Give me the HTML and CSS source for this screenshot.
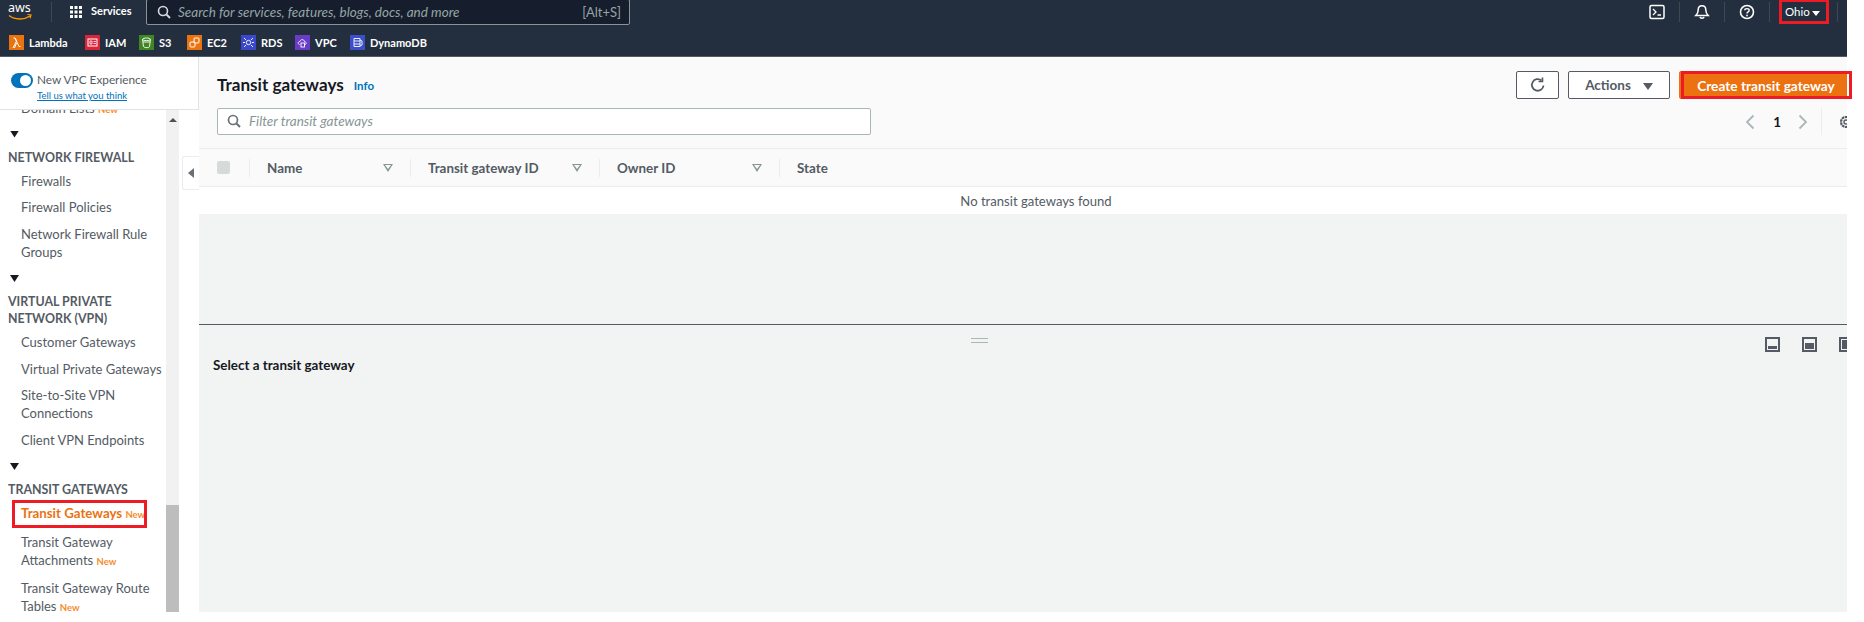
FILE: index.html
```html
<!DOCTYPE html>
<html lang="en">
<head>
<meta charset="utf-8">
<title>Transit gateways</title>
<link rel="stylesheet" href="styles.css">
</head>
<body>
<div class="page">
  <div class="app">
    <header class="nav">
      <div class="nav-top">
        <svg class="aws" viewBox="0 0 24 20" width="24" height="20"><text x="0" y="10" class="aws-text">aws</text><path d="M1 13.500c6 4.500 15 4.500 21 .5" fill="none" stroke="#f90" stroke-width="1.500"/><path d="M19.500 12.500l3.500.5-1 3.200" fill="none" stroke="#f90" stroke-width="1.200"/></svg>
        <span class="nav-sep sep-a"></span>
        <svg class="grid-icon" viewBox="0 0 14 14" width="14" height="14"><path fill="#fff" d="M1 1h3v3H1zM5.500 1h3v3h-3zM10 1h3v3h-3zM1 5.500h3v3H1zM5.500 5.500h3v3h-3zM10 5.500h3v3h-3zM1 10h3v3H1zM5.500 10h3v3h-3zM10 10h3v3h-3z"/></svg>
        <span class="services">Services</span>
        <div class="search">
          <svg viewBox="0 0 14 14" width="14" height="14"><circle cx="6" cy="6" r="4.500" fill="none" stroke="#d5dbdb" stroke-width="1.600"/><path d="M9.500 9.500L13 13" stroke="#d5dbdb" stroke-width="1.800"/></svg>
          <span class="search-text">Search for services, features, blogs, docs, and more</span>
          <span class="search-key">[Alt+S]</span>
        </div>
        <div class="nav-right">
          <svg viewBox="0 0 16 16" width="16" height="16"><rect x="1" y="1.500" width="14" height="13" rx="1.500" fill="none" stroke="#fff" stroke-width="1.500"/><path d="M4 5l3 3-3 3M8.500 11H12" fill="none" stroke="#fff" stroke-width="1.300"/></svg>
          <span class="nav-sep"></span>
          <svg viewBox="0 0 16 16" width="16" height="16"><path d="M8 1.800c-2.600 0-3.800 2-3.800 4.200 0 2.500-1 4-2.400 5.500h12.400C12.800 10 11.800 8.500 11.800 6c0-2.200-1.200-4.200-3.800-4.200zM6 13c.3 1.500 3.700 1.500 4 0" fill="none" stroke="#fff" stroke-width="1.500"/></svg>
          <span class="nav-sep"></span>
          <svg viewBox="0 0 16 16" width="16" height="16"><circle cx="8" cy="8" r="6.500" fill="none" stroke="#fff" stroke-width="1.600"/><path d="M5.800 6.300C5.800 4 10.200 4 10.200 6.300 10.200 8 8 7.800 8 9.500" fill="none" stroke="#fff" stroke-width="1.400"/><rect x="7.200" y="10.700" width="1.600" height="1.600" fill="#fff"/></svg>
          <span class="nav-sep"></span>
          <span class="region">Ohio</span><span class="caret-white"></span>
          <span class="nav-sep"></span>
        </div>
      </div>
      <div class="nav-fav">
        <span class="fav fav-lambda"><svg class="svc orange" viewBox="0 0 15 15"><path d="M4 13l3.500-7L6 3H4.500M6 3l4 8.500h1.500M7.500 8L5.500 13" fill="none" stroke="#fff" stroke-width="1"/></svg>Lambda</span>
        <span class="fav fav-iam"><svg class="svc red" viewBox="0 0 15 15"><rect x="3" y="4" width="9" height="7" fill="none" stroke="#fff"/><path d="M5 6h2v3H5zM8.500 6.500H11M8.500 8.500H11" fill="none" stroke="#fff" stroke-width=".8"/></svg>IAM</span>
        <span class="fav fav-s3"><svg class="svc green" viewBox="0 0 15 15"><path d="M3.500 4.500c0-2 8-2 8 0l-1 7c0 1.500-5 1.500-6 0zM3.500 4.500c1 1.500 7 1.500 8 0M4 7h7" fill="none" stroke="#fff" stroke-width=".9"/></svg>S3</span>
        <span class="fav fav-ec2"><svg class="svc orange" viewBox="0 0 15 15"><rect x="3" y="7" width="5" height="5" rx="1" fill="none" stroke="#fff"/><rect x="7" y="3" width="5" height="5" rx="1" fill="none" stroke="#fff"/></svg>EC2</span>
        <span class="fav fav-rds"><svg class="svc blue" viewBox="0 0 15 15"><circle cx="7.500" cy="7.500" r="2.200" fill="none" stroke="#fff" stroke-width=".9"/><path d="M3 3l2 2M12 3l-2 2M3 12l2-2M12 12l-2-2M2 7.500h2M11 7.500h2" stroke="#fff" stroke-width=".9"/></svg>RDS</span>
        <span class="fav fav-vpc"><svg class="svc purple" viewBox="0 0 15 15"><path d="M4.500 9.500c-2-.5-1.500-3 .5-3 .5-2.500 4-2.500 4.500 0 2 0 2 3 .5 3" fill="none" stroke="#fff" stroke-width=".9"/><rect x="6" y="8" width="3.500" height="4" fill="none" stroke="#fff" stroke-width=".9"/></svg>VPC</span>
        <span class="fav"><svg class="svc indigo" viewBox="0 0 15 15"><path d="M4 3.500h6v8H4zM4 6h6M4 9h6M10 5l2 1v4l-2 1" fill="none" stroke="#fff" stroke-width=".9"/></svg>DynamoDB</span>
      </div>
    </header>

    <div class="body">
      <aside class="sidebar">
        <div class="side-head">
          <div class="exp">
            <span class="toggle"></span>
            <div>
              <div class="exp-title">New VPC Experience</div>
              <a class="exp-link">Tell us what you think</a>
            </div>
          </div>
        </div>
        <div class="side-scroll">
          <div class="side-clip">
            <ul class="side-list">
              <li class="item item-first">Domain Lists <span class="new">New</span></li>
              <li class="tri"></li>
              <li class="heading">NETWORK FIREWALL</li>
              <li class="item">Firewalls</li>
              <li class="item">Firewall Policies</li>
              <li class="item">Network Firewall Rule Groups</li>
              <li class="tri"></li>
              <li class="heading">VIRTUAL PRIVATE NETWORK (VPN)</li>
              <li class="item">Customer Gateways</li>
              <li class="item">Virtual Private Gateways</li>
              <li class="item">Site-to-Site VPN Connections</li>
              <li class="item">Client VPN Endpoints</li>
              <li class="tri"></li>
              <li class="heading">TRANSIT GATEWAYS</li>
              <li class="item active">Transit Gateways <span class="new">New</span></li>
              <li class="item">Transit Gateway Attachments <span class="new">New</span></li>
              <li class="item">Transit Gateway Route Tables <span class="new">New</span></li>
            </ul>
          </div>
          <div class="scrollbar">
            <span class="arrow-up"></span>
            <span class="thumb"></span>
          </div>
        </div>
      </aside>

      <div class="rail"><span class="rail-tab"><span class="tri-left"></span></span></div>

      <main class="main">
        <section class="top-pane">
          <div class="toolbar">
            <div class="title-row">
              <h1>Transit gateways</h1>
              <span class="info">Info</span>
              <div class="actions">
                <button class="btn btn-icon"><svg viewBox="0 0 18 18" width="18" height="18"><path d="M14.500 9.500a5.800 5.800 0 1 1-2-5" fill="none" stroke="#545b64" stroke-width="1.800"/><path d="M13.500 1.500v4h-4" fill="none" stroke="#545b64" stroke-width="1.600"/></svg></button>
                <button class="btn btn-actions">Actions<span class="caret-dark"></span></button>
                <button class="btn btn-primary">Create transit gateway</button>
              </div>
            </div>
            <div class="filter-row">
              <div class="filter">
                <svg viewBox="0 0 14 14" width="14" height="14"><circle cx="6" cy="6" r="4.500" fill="none" stroke="#687078" stroke-width="1.700"/><path d="M9.500 9.500L13 13" stroke="#687078" stroke-width="2"/></svg>
                <span>Filter transit gateways</span>
              </div>
              <div class="pager">
                <svg viewBox="0 0 10 16" width="10" height="16"><path d="M8.500 1.500L2 8l6.500 6.500" fill="none" stroke="#aab7b8" stroke-width="1.800"/></svg>
                <b>1</b>
                <svg viewBox="0 0 10 16" width="10" height="16"><path d="M1.500 1.500L8 8l-6.500 6.500" fill="none" stroke="#aab7b8" stroke-width="1.800"/></svg>
                <span class="pager-sep"></span>
                <svg class="gear" viewBox="0 0 16 16" width="16" height="16"><circle cx="8" cy="8" r="5" fill="none" stroke="#545b64" stroke-width="2.200" stroke-dasharray="2.500 .6"/><circle cx="8" cy="8" r="2" fill="none" stroke="#545b64" stroke-width="1.400"/></svg>
              </div>
            </div>
          </div>
          <div class="thead">
            <span class="cell cell-check"><span class="check"></span></span>
            <span class="cell cell-name">Name<span class="sort"></span></span>
            <span class="cell cell-id">Transit gateway ID<span class="sort"></span></span>
            <span class="cell cell-owner">Owner ID<span class="sort"></span></span>
            <span class="cell cell-state">State</span>
          </div>
          <div class="empty-row">No transit gateways found</div>
        </section>

        <section class="bottom-pane">
          <span class="handle"></span>
          <div class="pane-head">
            <strong>Select a transit gateway</strong>
            <div class="pane-icons">
              <svg viewBox="0 0 15 15" width="15" height="15"><rect x="1" y="1" width="13" height="13" fill="none" stroke="#545b64" stroke-width="2"/><rect x="3" y="9" width="9" height="3" fill="#545b64"/></svg>
              <svg viewBox="0 0 15 15" width="15" height="15"><rect x="1" y="1" width="13" height="13" fill="none" stroke="#545b64" stroke-width="2"/><rect x="3" y="6" width="9" height="6" fill="#545b64"/></svg>
              <svg viewBox="0 0 15 15" width="15" height="15"><rect x="1" y="1" width="13" height="13" fill="none" stroke="#545b64" stroke-width="2"/><rect x="3" y="3" width="9" height="9" fill="#545b64"/></svg>
            </div>
          </div>
        </section>
      </main>
    </div>
  </div>
  <span class="mark mark-region"></span>
  <span class="mark mark-create"></span>
  <span class="mark mark-side"></span>
</div>
</body>
</html>
```
FILE: styles.css
```css
* { box-sizing: border-box; }
html, body { margin: 0; padding: 0; background: #fff; }
body { font-family: "Lato", "Open Sans", sans-serif; font-size: 13px; color: #16191f; }
.page { position: relative; width: 1864px; height: 622px; overflow: hidden; }
.app { width: 1847px; height: 612px; overflow: hidden; display: flex; flex-direction: column; }

.nav { height: 57px; background: #232f3e; color: #fff; flex: none; border-bottom: 1px solid #545b64; }
.nav-top { height: 31px; display: flex; align-items: flex-start; padding-left: 8px; }
.aws { margin-top: 2px; flex: none; }
.aws-text { font-family: "Noto Sans", sans-serif; font-size: 12.5px; fill: #fff; }
.nav-sep { width: 1px; height: 20px; background: #414750; flex: none; }
.sep-a { margin: 2px 0 0 19px; }
.grid-icon { margin: 5px 0 0 17px; flex: none; }
.services { margin: 2px 0 0 8px; font-size: 11px; font-weight: 700; line-height: 18px; width: 55px; flex: none; }
.search { width: 484px; height: 26px; margin-top: -1px; background: #161e2d; border: 1px solid #879596; border-radius: 2px; display: flex; align-items: center; padding: 0 8px 0 10px; flex: none; }
.search svg { flex: none; }
.search-text { margin-left: 7px; font-style: italic; color: #95a5a6; font-size: 13.5px; flex: 1; white-space: nowrap; }
.search-key { color: #95a5a6; font-size: 13px; }
.nav-right { margin-left: auto; display: flex; align-items: center; height: 24px; padding-right: 9px; }
.nav-right svg { flex: none; margin: 0 14px; }
.region { margin-left: 15px; width: 23px; font-size: 11.5px; line-height: 18px; }
.caret-white { margin: 2px 17px 0 4px; border: 4.5px solid transparent; border-top: 5px solid #fff; border-bottom: 0; }

.nav-fav { height: 23px; display: flex; align-items: center; font-size: 11px; font-weight: 700; padding-left: 9px; }
.fav { display: flex; align-items: center; gap: 5px; width: 76px; line-height: 16px; white-space: nowrap; }
.fav-iam { width: 54px; }
.fav-s3 { width: 48px; }
.fav-ec2 { width: 54px; }
.fav-rds { width: 54px; }
.fav-vpc { width: 55px; }
.svc { width: 15px; height: 15px; flex: none; }
.orange { background: #e8730f; }
.red { background: #d8253a; }
.green { background: #3f8624; }
.blue { background: #3b48cc; }
.purple { background: #693cc5; }
.indigo { background: #3b4fc9; }

.body { flex: 1; display: flex; min-height: 0; }
.sidebar { width: 179px; flex: none; display: flex; flex-direction: column; background: #fff; position: relative; }
.side-head { height: 53px; flex: none; width: 199px; background: #fff; border-bottom: 1px solid #e1e4e4; border-right: 1px solid #e1e4e4; padding: 15px 0 0 11px; position: relative; z-index: 2; }
.exp { display: flex; gap: 4px; }
.toggle { width: 22px; height: 15px; margin-top: 1px; border-radius: 8px; background: #0073bb; position: relative; flex: none; }
.toggle::after { content: ""; position: absolute; right: 2px; top: 2px; width: 11px; height: 11px; border-radius: 50%; background: #fff; }
.exp-title { font-size: 11.8px; line-height: 16px; color: #545b64; }
.exp-link { display: block; font-size: 9.5px; line-height: 14px; margin-top: 1px; color: #0073bb; text-decoration: underline; }
.side-scroll { flex: 1; display: flex; min-height: 0; }
.side-clip { width: 166px; overflow: hidden; }
.side-list { list-style: none; margin: -15px 0 0; padding: 0; width: 166px; }
.item { padding: 4px 0 4.5px 21px; line-height: 18px; color: #545b64; font-size: 13px; }
.item-first { padding-bottom: 1.5px; }
.tri { width: 9px; height: 7px; margin: 10px 0 11px 10px; background: #16191f; clip-path: polygon(0 0, 100% 0, 50% 100%); }
.heading { padding: 0 0 2px 8px; font-weight: 700; font-size: 12.4px; line-height: 17px; color: #545b64; width: 150px; }
.new { color: #f68d2e; font-size: 9.5px; font-weight: 700; }
.active { color: #ec7211; font-size: 13.3px; font-weight: 700; white-space: nowrap; }
.scrollbar { width: 13px; background: #f1f1f1; flex: none; display: flex; flex-direction: column; align-items: center; justify-content: space-between; padding-top: 8px; }
.arrow-up { border: 4px solid transparent; border-bottom: 4px solid #505050; border-top: 0; }
.thumb { width: 100%; height: 107px; background: #bdbdbd; }

.rail { width: 20px; flex: none; background: #fff; padding: 99px 0 0 3px; }
.rail-tab { display: flex; width: 17px; height: 34px; background: #fff; border: 1px solid #eaeded; border-right: 0; border-radius: 3px 0 0 3px; align-items: center; justify-content: center; }
.tri-left { border: 5px solid transparent; border-right: 6px solid #687078; border-left: 0; }

.main { flex: 1; min-width: 0; display: flex; flex-direction: column; background: #f2f3f3; }
.top-pane { height: 268px; flex: none; border-bottom: 1px solid #545b64; background: #f2f3f3; }
.toolbar { height: 92px; background: #fafafa; padding: 14px 0 0 18px; border-bottom: 1px solid #eaeded; }
.title-row { height: 28px; display: flex; align-items: center; }
h1 { margin: -1px 0 0; font-size: 17.1px; font-weight: 700; line-height: 24px; color: #16191f; }
.info { margin-left: 10px; margin-top: 1px; font-size: 11.5px; font-weight: 700; color: #0073bb; }
.actions { margin-left: auto; display: flex; gap: 9px; }
.btn { height: 28px; border: 1px solid #545b64; border-radius: 2px; background: #fff; font-family: inherit; font-size: 13.7px; font-weight: 700; color: #545b64; padding: 0; display: flex; align-items: center; justify-content: center; }
.btn-icon { width: 43px; }
.btn-actions { width: 102px; font-size: 13.5px; }
.caret-dark { margin: 2px 0 0 12px; border: 5px solid transparent; border-top: 7px solid #545b64; border-bottom: 0; }
.btn-primary { width: 168px; background: #ec7211; border-color: #ec7211; color: #fff; padding-left: 6px; }
.filter-row { display: flex; align-items: center; justify-content: space-between; margin-top: 9px; }
.filter { width: 654px; height: 27px; background: #fff; border: 1px solid #aab7b8; border-radius: 2px; display: flex; align-items: center; gap: 8px; padding: 0 0 1px 9px; font-style: italic; color: #879596; font-size: 13.5px; }
.pager { display: flex; align-items: center; margin-right: -7px; }
.pager b { margin: 0 17px 0 18px; font-size: 13.5px; }
.pager-sep { width: 1px; height: 27px; background: #eaeded; margin: 0 16px 0 13px; }
.thead { height: 38px; background: #fafafa; border-bottom: 1px solid #eaeded; display: flex; align-items: center; font-weight: 700; font-size: 13.4px; color: #545b64; }
.cell { display: flex; align-items: center; height: 18px; border-left: 1px solid #eaeded; padding-left: 17px; padding-right: 17px; justify-content: space-between; }
.cell-check { width: 50px; border-left: 0; padding-left: 18px; justify-content: flex-start; }
.check { width: 13px; height: 13px; background: #d5dbdb; border-radius: 2px; }
.cell-name { width: 161px; }
.cell-id { width: 189px; }
.cell-owner { width: 180px; }
.cell-state { flex: 1; }
.sort { border: 5px solid transparent; border-top: 8px solid #879596; border-bottom: 0; flex: none; position: relative; }
.sort::after { content: ""; position: absolute; left: -3px; top: -7px; border: 3px solid transparent; border-top: 4px solid #fafafa; border-bottom: 0; }
.empty-row { height: 27px; background: #fff; text-align: center; line-height: 28px; color: #545b64; font-size: 13.1px; padding-left: 26px; }
.bottom-pane { flex: 1; position: relative; background: #f2f3f3; padding: 12px 0 0 14px; }
.handle { position: absolute; left: 772px; top: 13px; width: 17px; height: 5px; border-top: 1px solid #aab7b8; border-bottom: 1px solid #aab7b8; }
.pane-head { display: flex; align-items: flex-start; justify-content: space-between; }
.pane-head strong { margin-top: 19px; font-size: 13.4px; font-weight: 700; line-height: 18px; color: #16191f; }
.pane-icons { display: flex; gap: 22px; margin-right: -7px; }

.mark { position: absolute; border: 3px solid #ed1c24; }
.mark-region { left: 1779px; top: -1px; width: 50px; height: 25px; }
.mark-create { left: 1681px; top: 71px; width: 171px; height: 28px; }
.mark-side { left: 12px; top: 500px; width: 135px; height: 28px; }
```
